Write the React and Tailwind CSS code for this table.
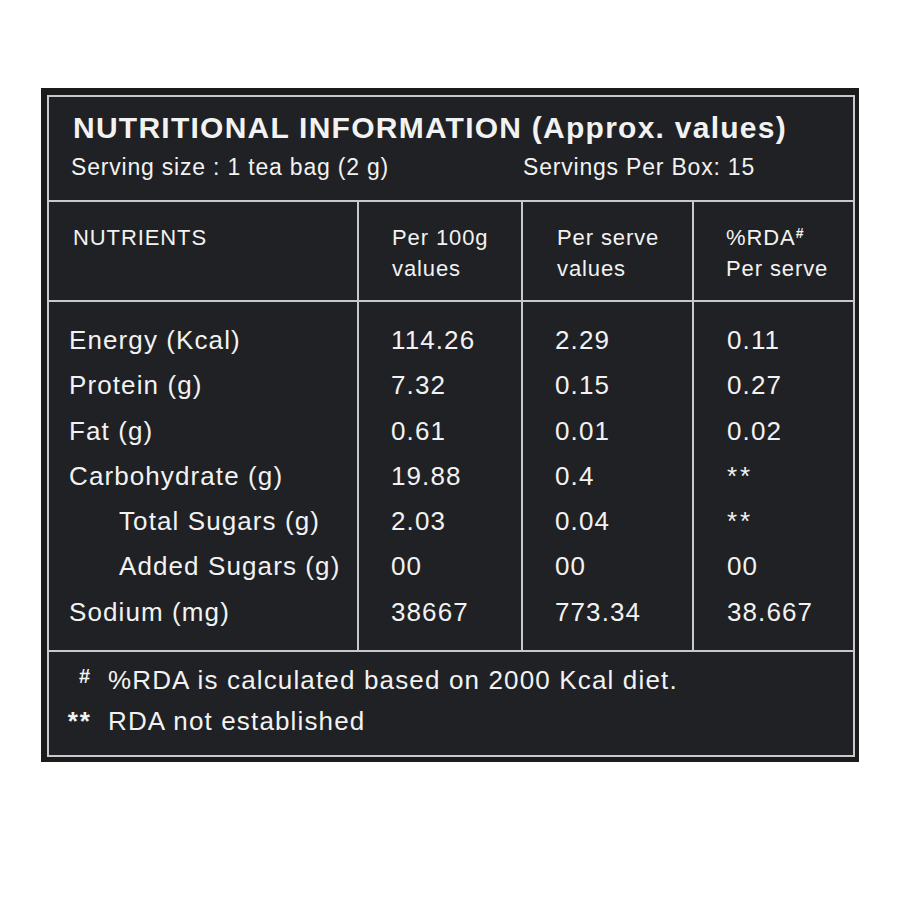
const rows = [
  { name: "Energy (Kcal)", per100: "114.26", serve: "2.29", rda: "0.11" },
  { name: "Protein (g)", per100: "7.32", serve: "0.15", rda: "0.27" },
  { name: "Fat (g)", per100: "0.61", serve: "0.01", rda: "0.02" },
  { name: "Carbohydrate (g)", per100: "19.88", serve: "0.4", rda: "**" },
  { name: "Total Sugars (g)", per100: "2.03", serve: "0.04", rda: "**", sub: true },
  { name: "Added Sugars (g)", per100: "00", serve: "00", rda: "00", sub: true },
  { name: "Sodium (mg)", per100: "38667", serve: "773.34", rda: "38.667" },
];

const font = { fontFamily: '"Liberation Sans", Arial, sans-serif' };

const Cell = ({ children, className = "" }) => (
  <div className={`border-r-2 border-[#c9c9c9] last:border-r-0 ${className}`}>{children}</div>
);

const App = () => {
  return (
    <div className="min-h-[900px] bg-white pt-[88px] pl-[41px]" style={font}>
      <div className="w-[818px] h-[674px] bg-[#1b1b1b] pt-[7px] pl-[6px] pr-[4px] pb-[5px]">
        <div className="border-2 border-[#c9c9c9] bg-[#1f2124] text-[#f2f2f2] h-[662px] flex flex-col">
          {/* title block */}
          <div className="h-[105px] border-b-2 border-[#c9c9c9] pt-[13px] pl-[22px]">
            <h1 className="ml-[2px] text-[30px] leading-[36px] font-bold tracking-[1.25px]">
              NUTRITIONAL INFORMATION (Approx. values)
            </h1>
            <div className="mt-[7px] flex text-[23px] leading-[28px] tracking-[0.8px]">
              <span className="w-[452px]">Serving size : 1 tea bag (2 g)</span>
              <span>Servings Per Box: 15</span>
            </div>
          </div>

          {/* column heads */}
          <div className="h-[100px] border-b-2 border-[#c9c9c9] grid grid-cols-[310px_164px_171px_1fr] text-[22px] leading-[31px] tracking-[0.9px]">
            <Cell className="pl-[24px] pt-[20px]">NUTRIENTS</Cell>
            <Cell className="pl-[33px] pt-[20px]">
              Per 100g
              <br />
              values
            </Cell>
            <Cell className="pl-[34px] pt-[20px]">
              Per serve
              <br />
              values
            </Cell>
            <Cell className="pl-[32px] pt-[20px]">
              %RDA<sup className="text-[14px] font-bold">#</sup>
              <br />
              Per serve
            </Cell>
          </div>

          {/* values */}
          <div className="h-[350px] border-b-2 border-[#c9c9c9] grid grid-cols-[310px_164px_171px_1fr] text-[26px] leading-[45.3px] tracking-[1.1px]">
            <Cell className="pl-[20px] pt-[16px]">
              {rows.map((r) => (
                <div key={r.name} className={r.sub ? "pl-[50px]" : ""}>
                  {r.name}
                </div>
              ))}
            </Cell>
            <Cell className="pl-[32px] pt-[16px]">
              {rows.map((r) => (
                <div key={r.name}>{r.per100}</div>
              ))}
            </Cell>
            <Cell className="pl-[32px] pt-[16px]">
              {rows.map((r) => (
                <div key={r.name}>{r.serve}</div>
              ))}
            </Cell>
            <Cell className="pl-[33px] pt-[16px]">
              {rows.map((r) => (
                <div key={r.name} className={r.rda === "**" ? "tracking-[3px]" : ""}>
                  {r.rda}
                </div>
              ))}
            </Cell>
          </div>

          {/* notes */}
          <div className="flex-1 pt-[8px] text-[26px] leading-[41px] tracking-[1.15px]">
            <div className="flex">
              <span className="w-[41px] text-right text-[20px] font-bold tracking-normal">
                <span className="relative top-[-4px]">#</span>
              </span>
              <span className="ml-[18px]">%RDA is calculated based on 2000 Kcal diet.</span>
            </div>
            <div className="flex">
              <span className="w-[43px] text-right font-bold tracking-[2px]">**</span>
              <span className="ml-[16px]">RDA not established</span>
            </div>
          </div>
        </div>
      </div>
    </div>
  );
};

export default App;
